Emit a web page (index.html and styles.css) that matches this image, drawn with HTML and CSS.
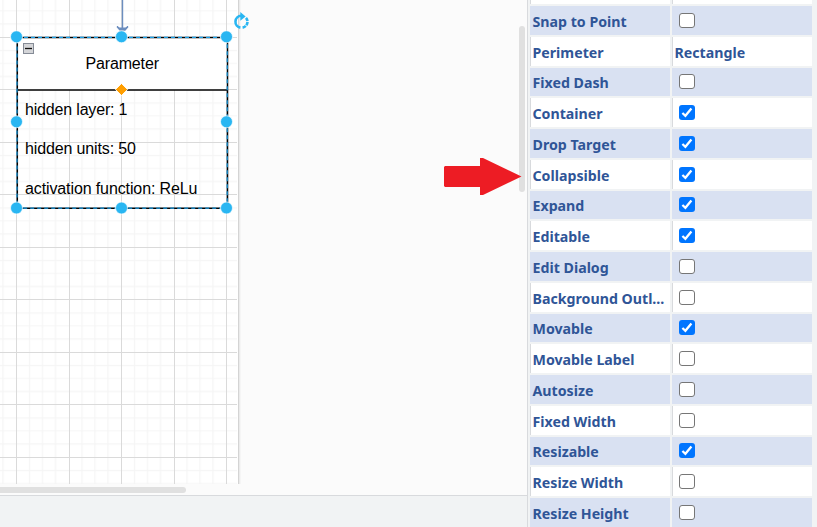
FILE: index.html
```html
<!DOCTYPE html>
<html lang="en">
<head>
<meta charset="utf-8">
<title>Diagram editor</title>
<link rel="stylesheet" href="styles.css">
</head>
<body>
<div class="app">
  <main class="workspace">
    <svg class="canvas" width="527" height="484" viewBox="0 0 527 484">
      <defs>
        <pattern id="minor" x="16" y="37" width="52.5" height="52.5" patternUnits="userSpaceOnUse">
          <path class="grid-minor" d="M13.5 0V52.5M26.5 0V52.5M39.5 0V52.5M0 13.5H52.5M0 26.5H52.5M0 39.5H52.5"/>
        </pattern>
      </defs>
      <rect width="238" height="484" fill="#fff"/>
      <rect width="237" height="484" fill="url(#minor)"/>
      <path class="grid-major" d="M16.5 0V484M69.5 0V484M121.5 0V484M174.5 0V484M226.5 0V484M0 37.5H237M0 89.5H237M0 142.5H237M0 194.5H237M0 247.5H237M0 299.5H237M0 352.5H237M0 404.5H237M0 457.5H237"/>
      <path d="M238.5 0V484" stroke="#d4d4d4"/>
      <path d="M239.5 0V484" stroke="#ebebeb"/>
      <path d="M240.5 0V484" stroke="#f5f5f5"/>
      <g class="edge"><path d="M122.5 0V29"/><path d="M117 26.5L119.5 28.3H125.5L128 26.5L125 30H120Z" fill="#6c8ebf"/></g>
      <rect x="17.5" y="37.5" width="210" height="52.5" fill="#fff"/>
      <path class="outline" d="M17.3 37.5H227.5V208.3H17.3ZM17.5 90H227.5"/>
      <path class="selection" d="M17 37.4H227.2V208.2H17Z"/>
      <g class="text">
        <text x="85.5" y="69" textLength="73.5">Parameter</text>
        <text x="25" y="115" textLength="102.5">hidden layer: 1</text>
        <text x="25" y="154" textLength="111">hidden units: 50</text>
        <text x="25" y="194" textLength="172.5">activation function: ReLu</text>
      </g>
      <rect x="23.5" y="43.5" width="10" height="10" fill="#d4d5d8" stroke="#858b96"/>
      <path d="M25 48.5H32" stroke="#111" stroke-width="1.3"/>
      <g class="handles">
        <circle cx="16.5" cy="36.8" r="6"/><circle cx="121.5" cy="36.8" r="6"/><circle cx="226.5" cy="36.8" r="6"/>
        <circle cx="16.5" cy="121.8" r="6"/><circle cx="226.5" cy="121.8" r="6"/>
        <circle cx="16.5" cy="208" r="6"/><circle cx="121.5" cy="208" r="6"/><circle cx="226.5" cy="208" r="6"/>
      </g>
      <path d="M121.5 83.4L127.6 89.5L121.5 95.6L115.4 89.5Z" fill="#ff9e00" stroke="#fff"/>
      <path d="M240.4 27.6A6 6 0 0 1 241.2 15.7" class="rotate"/>
      <path d="M246 17.8A6 6 0 0 1 242 27.7" class="rotate" stroke-dasharray="3.6 .8"/>
      <path d="M240.3 12L245.6 16.4L240.3 20.8Z" fill="#29b6f2"/>
      <rect x="519" y="26" width="6" height="166" rx="3" fill="#e0e0e0"/>
      <path d="M445 166H480V158H483L521.5 176.5L483 195H480V187H445L444 186V167Z" fill="#ed1c24"/>
    </svg>
    <div class="hscroll"><div class="thumb"></div></div>
    <div class="footer"></div>
  </main>
  <aside class="panel">
    <div class="row first"><div></div><div></div></div>
    <div class="row alt"><div>Snap to Point</div><div><i class="box"></i></div></div>
    <div class="row"><div>Perimeter</div><div>Rectangle</div></div>
    <div class="row alt"><div>Fixed Dash</div><div><i class="box"></i></div></div>
    <div class="row"><div>Container</div><div><i class="box on"></i></div></div>
    <div class="row alt"><div>Drop Target</div><div><i class="box on"></i></div></div>
    <div class="row"><div>Collapsible</div><div><i class="box on"></i></div></div>
    <div class="row alt"><div>Expand</div><div><i class="box on"></i></div></div>
    <div class="row"><div>Editable</div><div><i class="box on"></i></div></div>
    <div class="row alt"><div>Edit Dialog</div><div><i class="box"></i></div></div>
    <div class="row"><div>Background Outl...</div><div><i class="box"></i></div></div>
    <div class="row alt"><div>Movable</div><div><i class="box on"></i></div></div>
    <div class="row"><div>Movable Label</div><div><i class="box"></i></div></div>
    <div class="row alt"><div>Autosize</div><div><i class="box"></i></div></div>
    <div class="row"><div>Fixed Width</div><div><i class="box"></i></div></div>
    <div class="row alt"><div>Resizable</div><div><i class="box on"></i></div></div>
    <div class="row"><div>Resize Width</div><div><i class="box"></i></div></div>
    <div class="row alt"><div>Resize Height</div><div><i class="box"></i></div></div>
  </aside>
</div>
<script src="script.js"></script>
</body>
</html>
```
FILE: script.js
```js
document.querySelectorAll('.box.on').forEach(function (box) {
  box.innerHTML = '<svg viewBox="0 0 16 15"><path d="M3.4 8L6.4 10.8L12.4 3.6"/></svg>';
});
```
FILE: styles.css
```css
* { box-sizing: border-box; }
body { margin: 0; overflow: hidden; background: #f1f3f4; }
.app { display: flex; width: 817px; height: 527px; overflow: hidden; }
.workspace { flex: 0 0 527px; display: flex; flex-direction: column; background: #fbfbfb; }
.canvas { display: block; flex: none; }
.hscroll { height: 11px; padding-top: 3px; }
.thumb { width: 186px; height: 6px; border-radius: 0 3px 3px 0; background: #e0e0e0; }
.footer { flex: 1; border-top: 1px solid #d8dadd; background: #f1f3f4; }
.grid-minor { fill: none; stroke: #f5f5f5; stroke-width: 1.2; }
.grid-major { fill: none; stroke: #dadada; }
.edge path { stroke: #6c8ebf; stroke-width: 1.4; }
.outline { fill: none; stroke: #000; stroke-width: 1.5; }
.selection { fill: none; stroke: #1ca0e8; stroke-width: 1.2; stroke-dasharray: 4 3; }
.text { font: 16px "Liberation Sans", sans-serif; fill: #000; }
.handles { fill: #29b6f2; stroke: #fff; stroke-width: .7; }
.rotate { fill: none; stroke: #29b6f2; stroke-width: 2.6; }
.panel {
  flex: 1;
  border-left: 1px solid #d8dadd;
  padding-left: 2px;
  background: #f1f3f4;
  color: #2f5597;
  font: bold 14.2px/29px "Noto Sans", sans-serif;
}
.row { display: grid; grid-template-columns: 140px 140px; column-gap: 2px; height: 28.75px; margin-bottom: 2px; }
.row.first { height: 4px; }
.row > div {
  overflow: hidden;
  padding: .9px 2px 0 1.5px;
  border-left: 1px solid #d8dadd;
  background: #fff;
  white-space: nowrap;
}
.row.alt > div { background: #d9e1f2; border-left-color: #d9e1f2; }
.box {
  display: block;
  width: 16px;
  height: 15px;
  margin: 6px 0 0 4.5px;
  border: 1px solid #767676;
  border-radius: 3px;
  background: #fff;
}
.box.on { border: 0; background: #0075ff; }
.box svg { display: block; fill: none; stroke: #fff; stroke-width: 2.3; }
```
